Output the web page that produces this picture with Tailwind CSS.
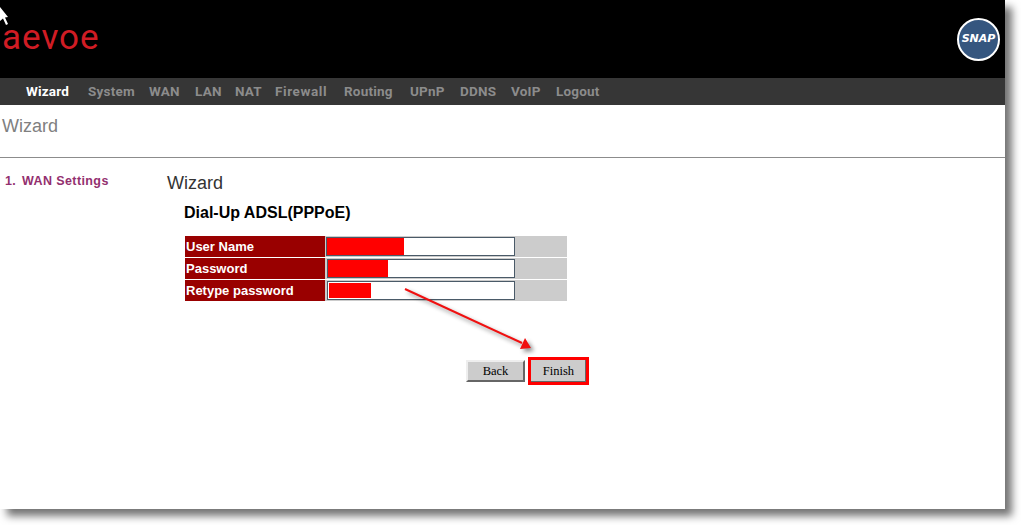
<!DOCTYPE html>
<html lang="en">
<head>
    <meta charset="UTF-8">
    <title>Wizard</title>
    <script src="https://cdn.jsdelivr.net/npm/@tailwindcss/browser@4"></script>
</head>
<body class="bg-white h-[525px] overflow-hidden font-['Liberation_Sans',sans-serif]">
    <div class="relative w-[1005px] h-[509px] bg-white shadow-[7px_7px_8px_rgba(0,0,0,0.55)]">
        <!-- header -->
        <div class="h-[78px] bg-black flex items-center justify-between pr-[5px]">
            <div class="pl-[2px] pb-[3px] text-[35px] leading-none tracking-[1px] text-[#d01c24] font-['Roboto',sans-serif]">aevoe</div>
            <div class="w-[43px] h-[43px] rounded-full bg-[#35567f] border-2 border-white flex items-center justify-center">
                <span class="text-white text-[11px] font-bold italic font-['DejaVu_Sans',sans-serif]">SNAP</span>
            </div>
        </div>

        <!-- nav -->
        <div class="h-[27px] bg-[#363636] flex items-center pl-[26px] text-[13.5px] tracking-[0.2px] font-bold text-[#8c8c8c] font-['Roboto',sans-serif]">
            <span class="w-[62px] text-white">Wizard</span>
            <span class="w-[61px]">System</span>
            <span class="w-[46px]">WAN</span>
            <span class="w-[40px]">LAN</span>
            <span class="w-[40px]">NAT</span>
            <span class="w-[69px] tracking-[0.6px]">Firewall</span>
            <span class="w-[66px]">Routing</span>
            <span class="w-[50px]">UPnP</span>
            <span class="w-[51px]">DDNS</span>
            <span class="w-[45px]">VoIP</span>
            <span>Logout</span>
        </div>

        <div class="h-[53px] pl-[2px] pt-[10px] text-[18px] leading-[22px] text-[#808080] border-b border-[#8c8c8c]">Wizard</div>

        <div class="flex">
            <div class="w-[167px] pl-[5px] pt-[15px] text-[12.5px] leading-[16px] font-bold text-[#93306f] tracking-[0.4px] flex">
                <span class="w-[17px]">1.</span>
                <span>WAN Settings</span>
            </div>
            <div>
                <div class="pt-[14px] text-[18px] leading-[22px] text-[#333]">Wizard</div>
                <div class="pt-[10px] pl-[17px] text-[16px] leading-[18px] font-bold text-black">Dial-Up ADSL(PPPoE)</div>

                <div class="ml-[18px] mt-[14px] w-[382px] flex flex-col gap-[1px] text-[13px] font-bold text-white">
                    <div class="flex h-[21px] bg-[#cccccc]">
                        <div class="w-[140px] bg-[#990000] pl-[1px] leading-[21px]">User Name</div>
                        <div class="w-[189px] ml-[1px] my-[1px] bg-white border border-[#4a5a68] flex">
                            <div class="w-[77px] bg-[#ff0000]"></div>
                        </div>
                    </div>
                    <div class="flex h-[21px] bg-[#cccccc]">
                        <div class="w-[140px] bg-[#990000] pl-[1px] leading-[21px]">Password</div>
                        <div class="w-[188px] ml-[2px] my-[1px] bg-white border border-[#4a5a68] flex">
                            <div class="w-[60px] bg-[#ff0000]"></div>
                        </div>
                    </div>
                    <div class="flex h-[21px] bg-[#cccccc]">
                        <div class="w-[140px] bg-[#990000] pl-[1px] leading-[21px]">Retype password</div>
                        <div class="w-[188px] ml-[2px] my-[1px] bg-white border border-[#4a5a68] flex pl-[1px] py-[1px]">
                            <div class="w-[42px] bg-[#ff0000]"></div>
                        </div>
                    </div>
                </div>

                <div class="mt-[56px] ml-[299px] flex items-center gap-[3px] font-['Liberation_Serif',serif] text-[12.5px] text-black">
                    <button class="w-[59px] h-[22px] bg-[#cccccc] border-2 border-t-[#eeeeee] border-l-[#eeeeee] border-r-[#666666] border-b-[#666666]">Back</button>
                    <button class="w-[61px] h-[28px] bg-[#cccccc] border-[3px] border-[#ff0000] shadow-[inset_-1px_-1px_0_#666666]">Finish</button>
                </div>
            </div>
        </div>

        <!-- annotation arrow -->
        <svg class="absolute left-0 top-0 pointer-events-none" width="1005" height="509">
            <g class="drop-shadow-[3px_3px_2px_rgba(0,0,0,0.45)]">
                <line x1="405" y1="289" x2="522" y2="343" stroke="#f01010" stroke-width="2"/>
                <polygon points="531,348 520,349 525,338" fill="#f01010"/>
            </g>
        </svg>

        <!-- mouse cursor -->
        <svg class="absolute left-0 top-0" width="12" height="26">
            <path d="M0 7 L8 17 L5 17.500 L8 24 L6 25 L3 18.500 L0 21 Z" fill="#fff"/>
        </svg>
    </div>
</body>
</html>
